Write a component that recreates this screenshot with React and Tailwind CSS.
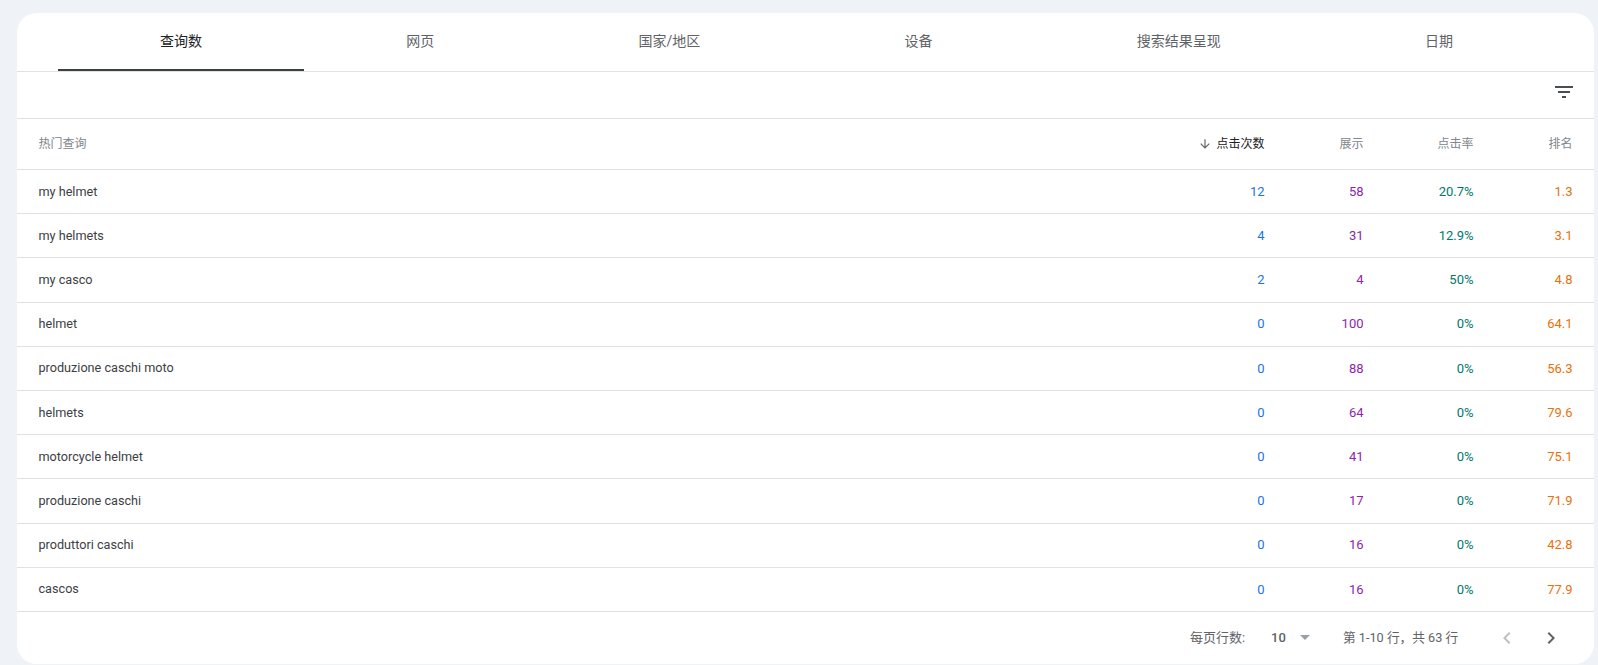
import React from "react";

const tabs = ["查询数", "网页", "国家/地区", "设备", "搜索结果呈现", "日期"];

const rows = [
  ["my helmet", "12", "58", "20.7%", "1.3"],
  ["my helmets", "4", "31", "12.9%", "3.1"],
  ["my casco", "2", "4", "50%", "4.8"],
  ["helmet", "0", "100", "0%", "64.1"],
  ["produzione caschi moto", "0", "88", "0%", "56.3"],
  ["helmets", "0", "64", "0%", "79.6"],
  ["motorcycle helmet", "0", "41", "0%", "75.1"],
  ["produzione caschi", "0", "17", "0%", "71.9"],
  ["produttori caschi", "0", "16", "0%", "42.8"],
  ["cascos", "0", "16", "0%", "77.9"],
];

const gridCols = "grid grid-cols-[1fr_100px_99px_110px_99px] items-center pl-[21.5px] pr-[21.5px]";

export default function App() {
  return (
    <div className="h-[665px] bg-[#eff3f8] pt-[13px] pl-[17px] pr-[4px] overflow-hidden font-['Roboto','Noto_Sans_CJK_SC',sans-serif]">
      <div className="h-[651px] bg-white rounded-[20px] overflow-hidden">
        {/* tabs */}
        <div className="flex h-[59px] pl-[41px] pr-[39px] border-b border-[#dfe1e5]">
          {tabs.map((t, i) => (
            <div
              key={t}
              className={`flex-auto h-[58px] pt-[18px] text-center text-[14px] leading-[20px] ${
                i === 0 ? "text-[#202124] border-b-2 border-[#3c4043]" : "text-[#5f6368]"
              }`}
            >
              {t}
            </div>
          ))}
        </div>

        {/* toolbar */}
        <div className="h-[47px] flex items-center justify-end pr-[18px] pb-[6px] border-b border-[#dfe1e5]">
          <svg width="24" height="24" viewBox="0 0 24 24" fill="#4a4d51">
            <path d="M10 18h4v-2h-4v2zM3 6v2h18V6H3zm3 7h12v-2H6v2z" />
          </svg>
        </div>

        {/* table head */}
        <div className={`${gridCols} h-[51px] border-b border-[#dfe1e5] text-[12px] text-[#80868b]`}>
          <div>热门查询</div>
          <div className="flex items-center justify-end text-[#202124]">
            <svg width="14" height="14" viewBox="0 0 24 24" fill="#5f6368" className="mr-[4px]">
              <path d="M20 12l-1.41-1.41L13 16.17V4h-2v12.17l-5.58-5.59L4 12l8 8 8-8z" />
            </svg>
            点击次数
          </div>
          <div className="text-right">展示</div>
          <div className="text-right">点击率</div>
          <div className="text-right">排名</div>
        </div>

        {/* rows */}
        {rows.map((r) => (
          <div key={r[0]} className={`${gridCols} h-[44.2px] border-b border-[#dfe1e5] text-[13px]`}>
            <div className="pt-[1px] text-[12.65px] text-[#3c4043]">{r[0]}</div>
            <div className="text-right text-[#1a73e8]">{r[1]}</div>
            <div className="text-right text-[#8e24aa]">{r[2]}</div>
            <div className="text-right text-[#00796b]">{r[3]}</div>
            <div className="text-right text-[#e8710a]">{r[4]}</div>
          </div>
        ))}

        {/* pagination */}
        <div className="h-[52px] flex items-center justify-end text-[13px] text-[#5f6368]">
          <span className="w-[81px]">每页行数:</span>
          <span className="w-[29px] font-medium">10</span>
          <svg width="10" height="5" viewBox="0 0 10 5" fill="#9aa0a6" className="mr-[33px]">
            <path d="M0 0h10L5 5z" />
          </svg>
          <span className="w-[152px] text-[12.7px]">第 1-10 行，共 63 行</span>
          <svg width="24" height="24" viewBox="0 0 24 24" fill="#bdc1c6" className="mr-[20px]">
            <path d="M15.41 7.41L14 6l-6 6 6 6 1.41-1.41L10.83 12z" />
          </svg>
          <svg width="24" height="24" viewBox="0 0 24 24" fill="#5f6368" className="mr-[31px]">
            <path d="M10 6L8.59 7.41 13.17 12l-4.58 4.59L10 18l6-6z" />
          </svg>
        </div>
      </div>
    </div>
  );
}
